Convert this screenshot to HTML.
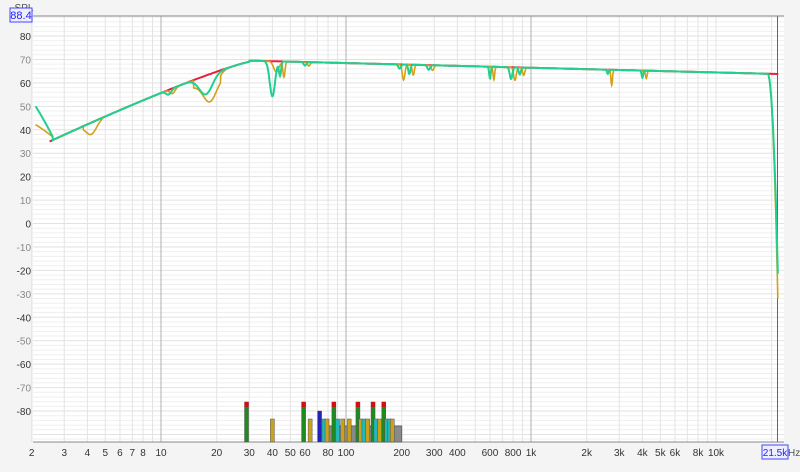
<!DOCTYPE html><html><head><meta charset="utf-8"><style>
body{margin:0;background:#f4f4f4;width:800px;height:472px;overflow:hidden;font-family:"Liberation Sans",sans-serif}
</style></head><body>
<svg id="s" width="800" height="472" xmlns="http://www.w3.org/2000/svg" style="position:absolute;left:0;top:0"></svg>
<script>
const S=document.getElementById('s');let h='';
const L=33,R=784,T=16,B=442;
const X=f=>161+185*Math.log10(f/10);
const Y=v=>36+(80-v)*2.344;
h+=`<rect x="${L}" y="${T}" width="${R-L}" height="${B-T}" fill="#fff"/>`;
for(let v=-92;v<=88;v+=2){const y=Y(v);if(y<T||y>B)continue;h+=`<line x1="${L}" x2="${R}" y1="${y}" y2="${y}" stroke="${v%10==0?'#e2e2e2':'#efefef'}" stroke-width="1"/>`;}
const fs=[];for(const d of [1,10,100,1000,10000])for(let m=1;m<10;m++){const f=m*d;if(f>=2&&f<=20000)fs.push(f);}
for(const f of fs){const x=X(f);const major=(f==10||f==100||f==1000);h+=`<line x1="${x}" x2="${x}" y1="${T}" y2="${B}" stroke="${major?'#b0b0b0':'#e4e4e4'}" stroke-width="1"/>`;}
h+=`<line x1="${X(21500)}" x2="${X(21500)}" y1="${T}" y2="${B}" stroke="#666" stroke-width="1"/>`;
h+=`<line x1="${L}" x2="${R}" y1="${T}" y2="${T}" stroke="#888"/><line x1="${L}" x2="${R}" y1="${B}" y2="${B}" stroke="#888"/>`;
for(let v=80;v>=-80;v-=10){h+=`<text x="31" y="${Y(v)+4}" font-size="10" text-anchor="end" fill="${v%20==0?'#333':'#888'}">${v}</text>`;}
h+=`<text x="24" y="11" font-size="10" text-anchor="middle" fill="#555">SPL</text>`;
h+=`<rect x="10" y="8" width="22" height="14" fill="#eef" stroke="#44f"/><text x="21" y="19" font-size="11" text-anchor="middle" fill="#22f">88.4</text>`;
const xl=[[2,'2'],[3,'3'],[4,'4'],[5,'5'],[6,'6'],[7,'7'],[8,'8'],[10,'10'],[20,'20'],[30,'30'],[40,'40'],[50,'50'],[60,'60'],[80,'80'],[100,'100'],[200,'200'],[300,'300'],[400,'400'],[600,'600'],[800,'800'],[1000,'1k'],[2000,'2k'],[3000,'3k'],[4000,'4k'],[5000,'5k'],[6000,'6k'],[8000,'8k'],[10000,'10k']];
for(const [f,t] of xl)h+=`<text x="${X(f)}" y="456" font-size="10" text-anchor="middle" fill="#333">${t}</text>`;
h+=`<rect x="762" y="445" width="26" height="14" fill="#eef" stroke="#44f"/><text x="775" y="456" font-size="10" text-anchor="middle" fill="#22f">21.5k</text><text x="788" y="456" font-size="10" fill="#555">Hz</text>`;
const bars=[[29,402,'g',1],[40,419,'o'],[59,402,'g',1],[64,419,'o'],[72,411,'b'],[76,419,'c'],[79,419,'o'],[86,402,'g',1],[90,419,'c'],[96,419,'o'],[104,419,'o'],[116,402,'g',1],[120,419,'o'],[125,419,'c'],[131,419,'o'],[140,402,'g',1],[145,419,'c'],[152,419,'o'],[160,402,'g',1],[166,419,'c'],[172,419,'c'],[178,419,'o']];
h+=`<rect x="${X(80)}" y="426" width="${X(200)-X(80)}" height="16" fill="#8a8a8a" stroke="#666"/>`;
const col={g:'#1f8a1f',o:'#c9a11a',b:'#2222bb',c:'#22b8b8'};
for(const [f,y,c,cap] of bars){const x=X(f)-2;h+=`<rect x="${x}" y="${y}" width="4" height="${B-y}" fill="${col[c]}" stroke="#555" stroke-width="0.5"/>`;if(cap)h+=`<rect x="${x}" y="${y}" width="4" height="5" fill="#d01010"/>`;}
function target(f){const lf=Math.log10(f);let v;
 if(f<30){v=69-34*Math.pow((Math.log10(30)-lf)/(Math.log10(30)-Math.log10(2.5)),1.15);}
 else v=69.5-(lf-Math.log10(30))*2.0;
 return v;}
let red='';for(let f=2.5;f<=21800;f*=1.02)red+=`${X(f).toFixed(1)},${Y(target(f)).toFixed(1)} `;
function dip(f,c,w,d){const t=Math.log10(f/c)/w;return -d*Math.exp(-t*t);}
const dips=[[11,0.02,2],[17.5,0.05,8],[40,0.02,15],[44,0.008,6],[60,0.01,1.5],[195,0.01,6],[220,0.008,4],[280,0.01,2],[600,0.006,5],[780,0.01,5],[870,0.008,3],[2600,0.006,6],[4000,0.006,3]];
function resp(f,alt){let v=target(f);
 if(f<2.6)v=37+(2.6-f)/0.5*13*(alt?0.4:1);
 if(alt&&f>3.8&&f<4.8)v+=dip(f,4.2,0.04,5);
 for(const [c,w,d] of dips)v+=dip(f,c*(alt?1.05:1),w,d*(alt?(c==40?0.3:1.1):(c==195||c==2600?0.3:1)));
 if(alt&&f>15&&f<21)v-=3;
 if(f>19000){const k=(f-19000)/2500;v-=k*k*(alt?90:80);}
 return v;}
let g='',o='';for(let f=2.1;f<=21600;f*=1.004){g+=`${X(f).toFixed(1)},${Y(resp(f,0)).toFixed(1)} `;o+=`${X(f).toFixed(1)},${Y(resp(f,1)).toFixed(1)} `;}
h+=`<polyline points="${red}" fill="none" stroke="#e8203c" stroke-width="2"/>`;
h+=`<polyline points="${o}" fill="none" stroke="#d4a017" stroke-width="1.6"/>`;
h+=`<polyline points="${g}" fill="none" stroke="#1fd08f" stroke-width="2"/>`;
S.innerHTML=h;
</script></body></html>
